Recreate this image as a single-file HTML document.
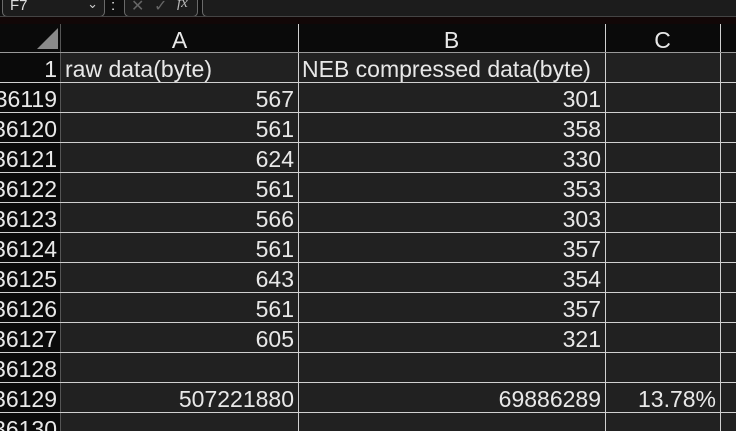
<!DOCTYPE html><html><head><style>
html,body{margin:0;width:736px;height:431px;overflow:hidden}
body{background:#0a0a0a;font-family:"Liberation Sans",Arial,sans-serif;position:relative}
.a{position:absolute}
.t{position:absolute;font-size:23px;color:#e8e8e8;line-height:30px;white-space:nowrap}
.box{position:absolute;top:-6px;height:21px;border:1px solid #6a6a6a;border-radius:5px;background:#1c1c1c}
</style></head><body>
<div class="a" style="left:0;top:0;width:736px;height:17px;background:#0f0f0f"></div>
<div class="box" style="left:2px;width:101px"><span style="position:absolute;left:7px;top:2px;color:#ddd;font-size:15px">F7</span><span style="position:absolute;right:6px;top:1px;color:#ccc;font-size:13px">&#8964;</span></div>
<div class="t" style="left:111px;top:-9px;font-size:15px">:</div>
<div class="box" style="left:124px;width:72px"><span style="position:absolute;left:6px;top:1px;color:#666;font-size:16px">✕</span><span style="position:absolute;left:29px;top:1px;color:#666;font-size:16px">✓</span><span style="position:absolute;left:52px;top:0px;color:#bbb;font-size:15px;font-style:italic;font-family:'Liberation Serif',serif">fx</span></div>
<div class="box" style="left:202px;width:540px"></div>
<div class="a" style="left:0;top:16px;width:736px;height:1px;background:#444"></div>
<div class="a" style="left:0;top:17px;width:736px;height:7px;background:#120707"></div>
<div class="a" style="left:0;top:24px;width:736px;height:28px;background:#0a0a0a"></div>
<svg class="a" style="left:36px;top:28px" width="22" height="22"><polygon points="22,0 22,21 1,21" fill="#8a8a8a"/></svg>
<div class="t" style="left:61px;width:237px;top:25px;text-align:center">A</div>
<div class="t" style="left:298px;width:307px;top:25px;text-align:center">B</div>
<div class="t" style="left:605px;width:115px;top:25px;text-align:center">C</div>
<div class="a" style="left:61px;top:52px;width:675px;height:379px;background:#212121"></div>
<div id="g"></div>
<script>
var h='';
[60,298,605,720].forEach(function(x){h+='<div class="a" style="left:'+x+'px;top:24px;width:1px;height:407px;background:'+(x==60?'#555':'#d0d0d0')+'"></div>';});
h+='<div class="a" style="left:0;top:52px;width:736px;height:1px;background:#999"></div>';
for(var y=82;y<431;y+=30)h+='<div class="a" style="left:0;top:'+y+'px;width:736px;height:1px;background:#d0d0d0"></div>';
var rows=[['1','raw data(byte)','NEB compressed data(byte)',''],['36119','567','301'],['36120','561','358'],['36121','624','330'],['36122','561','353'],['36123','566','303'],['36124','561','357'],['36125','643','354'],['36126','561','357'],['36127','605','321'],['36128','',''],['36129','507221880','69886289','13.78%'],['36130','','']];
rows.forEach(function(r,i){var y=52+30*i+2;
h+='<div class="t" style="right:'+(736-57)+'px;top:'+y+'px">'+r[0]+'</div>';
if(i==0){h+='<div class="t" style="left:65px;top:'+y+'px">'+r[1]+'</div><div class="t" style="left:302px;top:'+y+'px">'+r[2]+'</div>';}
else{h+='<div class="t" style="right:'+(736-294)+'px;top:'+y+'px">'+r[1]+'</div><div class="t" style="right:'+(736-601)+'px;top:'+y+'px">'+r[2]+'</div>';
if(r[3])h+='<div class="t" style="right:'+(736-716)+'px;top:'+y+'px">'+r[3]+'</div>';}
});
document.getElementById('g').innerHTML=h;
</script>
</body></html>
